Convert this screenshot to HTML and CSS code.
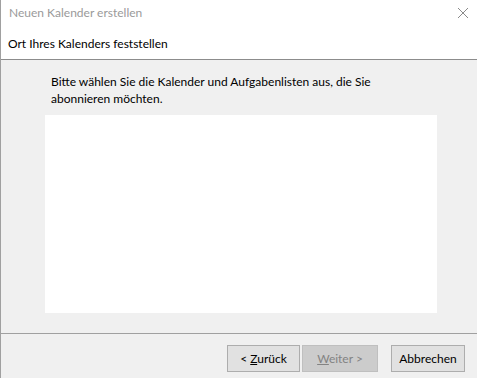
FILE: index.html
```html
<!DOCTYPE html>
<html lang="de">
<head>
  <meta charset="UTF-8">
  <title>Neuen Kalender erstellen</title>
  <link rel="stylesheet" href="styles.css">
</head>
<body>

  <!-- Header -->
  <div class="dialog-header">
    <div class="title-row">
      <span class="window-title">Neuen Kalender erstellen</span>
      <svg class="close-icon" width="12" height="12" viewBox="0 0 12 12">
        <path d="M1 1 L11 11 M11 1 L1 11" stroke="#8a8a8a" stroke-width="1" fill="none"/>
      </svg>
    </div>
    <div class="page-title">Ort Ihres Kalenders feststellen</div>
  </div>

  <!-- Content -->
  <div class="dialog-body">
    <p class="intro">Bitte wählen Sie die Kalender und Aufgabenlisten aus, die Sie abonnieren möchten.</p>
    <div class="calendar-list"></div>
  </div>

  <!-- Buttons -->
  <div class="dialog-footer">
    <button class="btn">&lt; <u>Z</u>urück</button>
    <button class="btn btn-disabled" disabled><u>W</u>eiter &gt;</button>
    <button class="btn btn-cancel">Abbrechen</button>
  </div>

</body>
</html>
```

FILE: styles.css
```css
/* Global Styles */
html, body {
  height: 100%;
}

body {
  margin: 0;
  padding: 0;
  font-family: "Lato", "Noto Sans", sans-serif;
  font-size: 12px;
  color: #000;
  background-color: #f0f0f0;
  border-left: 1px solid #a0a0a0;
  box-sizing: border-box;
  display: flex;
  flex-direction: column;
}

/* Header */
.dialog-header {
  background-color: #fff;
  height: 59px;
  border-bottom: 1px solid #8c8c8c;
  padding-left: 7px;
  flex-shrink: 0;
}

.title-row {
  display: flex;
  justify-content: space-between;
  align-items: center;
  height: 24px;
  padding-right: 8px;
}

.window-title {
  color: #9a9a9a;
  margin-left: 1px;
}

.close-icon {
  margin-top: 1px;
}

.page-title {
  margin-top: 12px;
}

/* Body */
.dialog-body {
  height: 274px;
  border-bottom: 1px solid #a0a0a0;
  padding: 13px 0 0 44px;
  box-sizing: border-box;
  flex-shrink: 0;
}

.intro {
  margin: 0 0 0 6px;
  width: 330px;
  line-height: 17px;
}

.calendar-list {
  width: 392px;
  height: 198px;
  margin-top: 8px;
  background-color: #fff;
}

/* Footer */
.dialog-footer {
  display: flex;
  justify-content: flex-end;
  padding: 11px 12px 0 0;
}

.btn {
  font-family: inherit;
  font-size: 12px;
  height: 27px;
  width: 73px;
  margin-left: 2px;
  padding: 0;
  background-color: #e1e1e1;
  border: 1px solid #adadad;
  color: #000;
}

.btn-disabled {
  width: 76px;
  background-color: #cccccc;
  border-color: #bfbfbf;
  color: #838383;
}

.btn-cancel {
  width: 74px;
  margin-left: 13px;
}
```
